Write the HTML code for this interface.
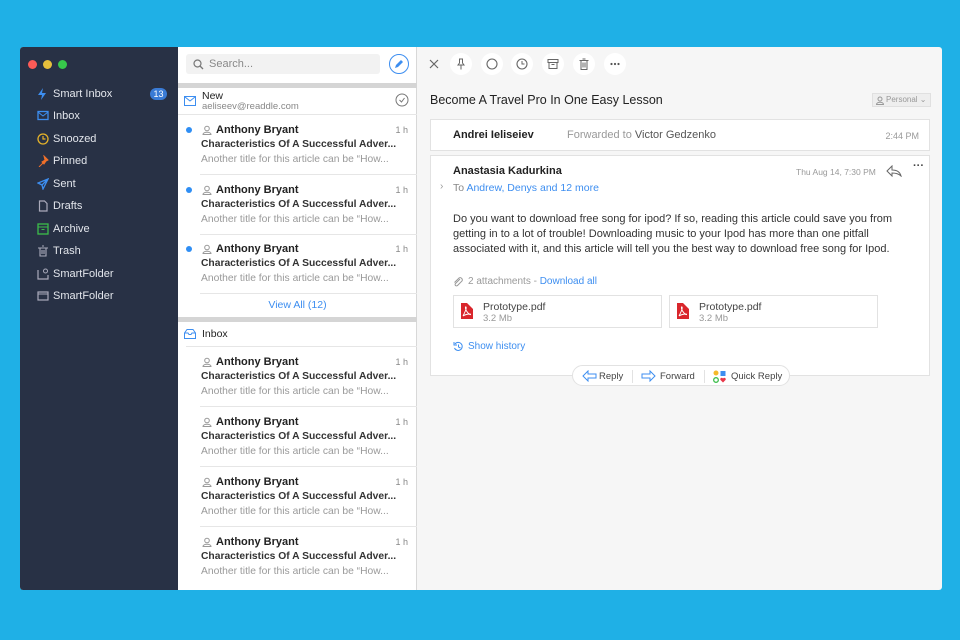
<!DOCTYPE html>
<html><head><meta charset="utf-8"><style>
*{margin:0;padding:0;box-sizing:border-box}
body{width:960px;height:640px;background:#1fb0e6;font-family:"Liberation Sans",sans-serif;position:relative;overflow:hidden}
.a{position:absolute}
.win{left:20px;top:47px;width:922px;height:543px;background:#f6f6f6;overflow:hidden;border-radius:3px}
.side{left:0;top:0;width:158px;height:543px;background:#283145}
.dot{width:9px;height:9px;border-radius:50%;top:13px}
.nav{left:0;width:158px;height:22px;color:#e3e6ec;font-size:11px;line-height:22px}
.nav span{position:absolute;left:33px}
.nav svg{position:absolute;left:17px;top:5px}
.list{left:158px;top:0;width:239px;height:543px;background:#fff;border-right:1px solid #d8d8d8}
.item{left:0;width:239px;height:60px}
.item .dt{left:8px;top:12px;width:6px;height:6px;border-radius:50%;background:#2f8ef4}
.item .nm{left:38px;top:9px;font-size:11px;font-weight:bold;color:#222}
.item .pi{left:24px;top:10px}
.item .tm{right:9px;top:10px;font-size:9px;color:#888}
.item .sb{left:23px;top:24px;font-size:10.3px;font-weight:bold;color:#333}
.item .pv{left:23px;top:39px;font-size:10.3px;color:#999}
.item .ln{left:22px;bottom:0;right:0;height:1px;background:#e6e6e6}
.gbar{left:0;width:239px;height:5px;background:#d5d5d5}
.tb{width:22px;height:22px;border-radius:50%;background:#fff;top:6px}
.tb svg{position:absolute;left:5px;top:5px}
.card{background:#fff;border:1px solid #e2e2e2}
</style></head><body>
<div class="a win">
 <div class="a side">
  <div class="a dot" style="left:8px;background:#fc5b57"></div>
  <div class="a dot" style="left:23px;background:#e5bf3c"></div>
  <div class="a dot" style="left:38px;background:#37c84b"></div>
  <div class="a nav" style="top:36px"><svg width="10" height="12"><path d="M6 0L1 7h4l-1 5 5-7H5z" fill="#3d8ef0"/></svg><span>Smart Inbox</span><div class="a" style="left:130px;top:5px;width:17px;height:12px;border-radius:6px;background:#3a7bd5;color:#fff;font-size:9px;line-height:12px;text-align:center">13</div></div>
  <div class="a nav" style="top:58px"><svg width="12" height="11"><rect x="1" y="1.5" width="10" height="8" fill="none" stroke="#3d8ef0" stroke-width="1.3"/><path d="M1 2l5 4 5-4" fill="none" stroke="#3d8ef0"/></svg><span>Inbox</span></div>
  <div class="a nav" style="top:81px"><svg width="12" height="12"><circle cx="6" cy="6" r="5" fill="none" stroke="#e5b32a" stroke-width="1.3"/><path d="M6 3v3h2.5" fill="none" stroke="#e5b32a" stroke-width="1.2"/></svg><span>Snoozed</span></div>
  <div class="a nav" style="top:103px"><svg width="12" height="12"><path d="M7 1l4 4-2 1-2 3-1-1-4 4 4-4-1-1 3-2z" fill="#f0702a" stroke="#f0702a"/></svg><span>Pinned</span></div>
  <div class="a nav" style="top:126px"><svg width="12" height="12"><path d="M11 1L1 5l4 2 1 4z M11 1L5 7" fill="none" stroke="#3d8ef0" stroke-width="1.3"/></svg><span>Sent</span></div>
  <div class="a nav" style="top:148px"><svg width="12" height="12"><path d="M2.5 1h5l2.5 2.5V11h-7.5z" fill="none" stroke="#aab" stroke-width="1.2"/></svg><span>Drafts</span></div>
  <div class="a nav" style="top:171px"><svg width="12" height="12"><rect x="1" y="1" width="10" height="10" fill="none" stroke="#3cbd4a" stroke-width="1.3"/><path d="M1 4h10M4.5 6.5h3" stroke="#3cbd4a"/></svg><span>Archive</span></div>
  <div class="a nav" style="top:193px"><svg width="12" height="12"><path d="M1 3h10M3 3v8h6V3M5 1h2M5 5v4M7 5v4" fill="none" stroke="#aab" stroke-width="1.1"/></svg><span>Trash</span></div>
  <div class="a nav" style="top:216px"><svg width="12" height="12"><path d="M1 2v9h10V7" fill="none" stroke="#aab" stroke-width="1.2"/><circle cx="8.5" cy="3" r="2" fill="none" stroke="#aab"/></svg><span>SmartFolder</span></div>
  <div class="a nav" style="top:238px"><svg width="12" height="12"><rect x="1" y="2" width="10" height="8" fill="none" stroke="#aab" stroke-width="1.2"/><path d="M1 4h10" stroke="#aab"/></svg><span>SmartFolder</span></div>
 </div>
 <div class="a list">
  <div class="a" style="left:8px;top:7px;width:194px;height:20px;background:#f2f2f2;border-radius:3px"><svg class="a" style="left:7px;top:5px" width="11" height="11"><circle cx="4.5" cy="4.5" r="3.5" fill="none" stroke="#777" stroke-width="1.2"/><path d="M7 7l3 3" stroke="#777" stroke-width="1.3"/></svg><div class="a" style="left:23px;top:4px;font-size:11px;color:#888">Search...</div></div>
  <div class="a" style="left:211px;top:7px;width:20px;height:20px;border-radius:50%;border:1.3px solid #3d8ef0"><svg class="a" style="left:4px;top:4px" width="10" height="10"><path d="M1 9l1-3 5-5 2 2-5 5z" fill="#3d8ef0"/></svg></div>
  <div class="a gbar" style="top:36px"></div>
  <svg class="a" style="left:6px;top:49px" width="12" height="10"><rect x=".5" y=".5" width="11" height="9" fill="none" stroke="#3d8ef0"/><path d="M1 1l5 4 5-4" fill="none" stroke="#3d8ef0"/></svg>
  <div class="a" style="left:24px;top:43px;font-size:10.5px;color:#222">New</div>
  <div class="a" style="left:24px;top:54px;font-size:9.5px;color:#888">aeliseev@readdle.com</div>
  <svg class="a" style="left:217px;top:46px" width="14" height="14"><circle cx="7" cy="7" r="6" fill="none" stroke="#777"/><path d="M4.5 7l2 2 3-4" fill="none" stroke="#777"/></svg>
  <div class="a" style="left:0;top:67px;width:239px;height:1px;background:#e6e6e6"></div>

  <div class="a item" style="top:68px"><div class="a dt"></div><svg class="a pi" width="10" height="10"><circle cx="5" cy="3.5" r="2.3" fill="none" stroke="#999"/><path d="M1 9.5c0-3 8-3 8 0z" fill="none" stroke="#999"/></svg><div class="a nm">Anthony Bryant</div><div class="a tm">1 h</div><div class="a sb">Characteristics Of A Successful Adver...</div><div class="a pv">Another title for this article can be “How...</div><div class="a ln"></div></div>
  <div class="a item" style="top:128px"><div class="a dt"></div><svg class="a pi" width="10" height="10"><circle cx="5" cy="3.5" r="2.3" fill="none" stroke="#999"/><path d="M1 9.5c0-3 8-3 8 0z" fill="none" stroke="#999"/></svg><div class="a nm">Anthony Bryant</div><div class="a tm">1 h</div><div class="a sb">Characteristics Of A Successful Adver...</div><div class="a pv">Another title for this article can be “How...</div><div class="a ln"></div></div>
  <div class="a item" style="top:187px"><div class="a dt"></div><svg class="a pi" width="10" height="10"><circle cx="5" cy="3.5" r="2.3" fill="none" stroke="#999"/><path d="M1 9.5c0-3 8-3 8 0z" fill="none" stroke="#999"/></svg><div class="a nm">Anthony Bryant</div><div class="a tm">1 h</div><div class="a sb">Characteristics Of A Successful Adver...</div><div class="a pv">Another title for this article can be “How...</div><div class="a ln"></div></div>
  <div class="a" style="left:0;width:239px;top:252px;text-align:center;font-size:10.5px;color:#3d8ef0">View All (12)</div>
  <div class="a gbar" style="top:270px"></div>
  <svg class="a" style="left:6px;top:282px" width="12" height="10"><path d="M.5 4L3 .5h6L11.5 4v5.5H.5z M.5 4h3.5l1 1.5h2l1-1.5h3.5" fill="none" stroke="#3d8ef0"/></svg>
  <div class="a" style="left:24px;top:281px;font-size:10.5px;color:#222">Inbox</div>
  <div class="a" style="left:8px;top:299px;width:231px;height:1px;background:#e6e6e6"></div>
  <div class="a item" style="top:300px"><svg class="a pi" width="10" height="10"><circle cx="5" cy="3.5" r="2.3" fill="none" stroke="#999"/><path d="M1 9.5c0-3 8-3 8 0z" fill="none" stroke="#999"/></svg><div class="a nm">Anthony Bryant</div><div class="a tm">1 h</div><div class="a sb">Characteristics Of A Successful Adver...</div><div class="a pv">Another title for this article can be “How...</div><div class="a ln"></div></div>
  <div class="a item" style="top:360px"><svg class="a pi" width="10" height="10"><circle cx="5" cy="3.5" r="2.3" fill="none" stroke="#999"/><path d="M1 9.5c0-3 8-3 8 0z" fill="none" stroke="#999"/></svg><div class="a nm">Anthony Bryant</div><div class="a tm">1 h</div><div class="a sb">Characteristics Of A Successful Adver...</div><div class="a pv">Another title for this article can be “How...</div><div class="a ln"></div></div>
  <div class="a item" style="top:420px"><svg class="a pi" width="10" height="10"><circle cx="5" cy="3.5" r="2.3" fill="none" stroke="#999"/><path d="M1 9.5c0-3 8-3 8 0z" fill="none" stroke="#999"/></svg><div class="a nm">Anthony Bryant</div><div class="a tm">1 h</div><div class="a sb">Characteristics Of A Successful Adver...</div><div class="a pv">Another title for this article can be “How...</div><div class="a ln"></div></div>
  <div class="a item" style="top:480px"><svg class="a pi" width="10" height="10"><circle cx="5" cy="3.5" r="2.3" fill="none" stroke="#999"/><path d="M1 9.5c0-3 8-3 8 0z" fill="none" stroke="#999"/></svg><div class="a nm">Anthony Bryant</div><div class="a tm">1 h</div><div class="a sb">Characteristics Of A Successful Adver...</div><div class="a pv">Another title for this article can be “How...</div></div>
 </div>

 <div class="a" style="left:398px;top:0;width:524px;height:543px">
  <svg class="a" style="left:11px;top:12px" width="10" height="10"><path d="M1 1l8 8M9 1L1 9" stroke="#666" stroke-width="1.2"/></svg>
  <div class="a tb" style="left:32px"><svg width="12" height="12"><path d="M4 1h4M4.5 1v4L3 7h6L7.5 5V1M6 7v4.5" fill="none" stroke="#666"/></svg></div>
  <div class="a tb" style="left:63px"><svg width="12" height="12"><circle cx="6" cy="6" r="5" fill="none" stroke="#666" stroke-width="1.1"/></svg></div>
  <div class="a tb" style="left:93px"><svg width="12" height="12"><circle cx="6" cy="6" r="5" fill="none" stroke="#666" stroke-width="1.1"/><path d="M6 3v3h2.5" fill="none" stroke="#666"/></svg></div>
  <div class="a tb" style="left:124px"><svg width="12" height="12"><rect x="1" y="1.5" width="10" height="3" fill="none" stroke="#666"/><path d="M2 4.5v6h8v-6M4.5 6.5h3" fill="none" stroke="#666"/></svg></div>
  <div class="a tb" style="left:155px"><svg width="12" height="12"><path d="M1.5 2.5h9M3 2.5v9h6v-9M4.5 1h3M5 4.5v5M7 4.5v5" fill="none" stroke="#666"/></svg></div>
  <div class="a tb" style="left:186px"><svg width="12" height="12"><circle cx="2.5" cy="6" r="1.1" fill="#555"/><circle cx="6" cy="6" r="1.1" fill="#555"/><circle cx="9.5" cy="6" r="1.1" fill="#555"/></svg></div>
  <div class="a" style="left:12px;top:46px;font-size:12.5px;color:#222">Become A Travel Pro In One Easy Lesson</div>
  <div class="a" style="left:454px;top:46px;width:59px;height:14px;background:#eee;border:1px solid #e0e0e0;font-size:8px;color:#999;line-height:12px;padding-left:13px">Personal ⌄<svg class="a" style="left:3px;top:2px" width="8" height="9"><circle cx="4" cy="3" r="2" fill="none" stroke="#999"/><path d="M.5 8.5c0-3 7-3 7 0z" fill="none" stroke="#999"/></svg></div>
  <div class="a card" style="left:12px;top:72px;width:500px;height:32px"><div class="a" style="left:22px;top:9px;font-size:11px;font-weight:bold;color:#222">Andrei Ieliseiev</div><div class="a" style="left:136px;top:9px;font-size:11px;color:#999">Forwarded to <span style="color:#555">Victor Gedzenko</span></div><div class="a" style="right:10px;top:11px;font-size:9px;color:#999">2:44 PM</div></div>
  <div class="a card" style="left:12px;top:108px;width:500px;height:221px">
   <div class="a" style="left:22px;top:9px;font-size:11px;font-weight:bold;color:#222">Anastasia Kadurkina</div>
   <div class="a" style="left:365px;top:11px;font-size:8.5px;color:#999">Thu Aug 14, 7:30 PM</div>
   <svg class="a" style="left:455px;top:9px" width="16" height="12"><path d="M6 1L1 6l5 5V8c4 0 7 1 9 3-1-4-4-6-9-6V1z" fill="none" stroke="#666"/></svg>
   <div class="a" style="left:482px;top:4px;font-size:11px;color:#444;font-weight:bold">···</div>
   <div class="a" style="left:9px;top:25px;font-size:10px;color:#999">›</div>
   <div class="a" style="left:22px;top:26px;font-size:10.5px;color:#888">To <span style="color:#3d8ef0">Andrew, Denys and 12 more</span></div>
   <div class="a" style="left:22px;top:56px;width:448px;font-size:11px;line-height:15px;color:#333">Do you want to download free song for ipod? If so, reading this article could save you from getting in to a lot of trouble! Downloading music to your Ipod has more than one pitfall associated with it, and this article will tell you the best way to download free song for Ipod.</div>
   <svg class="a" style="left:22px;top:121px" width="10" height="10"><path d="M7 2L2.5 6.5a1.3 1.3 0 002 2L9 4a2.2 2.2 0 00-3-3L1.5 5.5" fill="none" stroke="#999"/></svg>
   <div class="a" style="left:37px;top:120px;font-size:10px;color:#999">2 attachments - <span style="color:#3d8ef0">Download all</span></div>
   <div class="a" style="left:22px;top:139px;width:209px;height:33px;border:1px solid #e2e2e2"><svg class="a" style="left:7px;top:7px" width="12" height="16"><path d="M0 0h6l6 6v10H0z" fill="#d9262c"/><path d="M2 13c2-4 4-8 3-9s-1 3 2 6 3 1 2 1-4 0-7 2" fill="none" stroke="#fff" stroke-width=".9"/></svg><div class="a" style="left:29px;top:5px;font-size:10.5px;color:#444">Prototype.pdf</div><div class="a" style="left:29px;top:17px;font-size:9.5px;color:#999">3.2 Mb</div></div>
   <div class="a" style="left:238px;top:139px;width:209px;height:33px;border:1px solid #e2e2e2"><svg class="a" style="left:7px;top:7px" width="12" height="16"><path d="M0 0h6l6 6v10H0z" fill="#d9262c"/><path d="M2 13c2-4 4-8 3-9s-1 3 2 6 3 1 2 1-4 0-7 2" fill="none" stroke="#fff" stroke-width=".9"/></svg><div class="a" style="left:29px;top:5px;font-size:10.5px;color:#444">Prototype.pdf</div><div class="a" style="left:29px;top:17px;font-size:9.5px;color:#999">3.2 Mb</div></div>
   <svg class="a" style="left:22px;top:185px" width="11" height="11"><path d="M2 3a4 4 0 11-.5 4M1 1v3h3M5.5 3.5v2.5l2 1" fill="none" stroke="#3d8ef0"/></svg>
   <div class="a" style="left:37px;top:185px;font-size:10px;color:#3d8ef0">Show history</div>
  </div>
  <div class="a" style="left:154px;top:318px;width:218px;height:21px;background:#fff;border:1px solid #e2e2e2;border-radius:11px;font-size:9.5px;color:#444">
   <svg class="a" style="left:9px;top:4px" width="15" height="12"><path d="M6 1L1 6l5 5V8h8V4H6z" fill="none" stroke="#3d8ef0"/></svg><div class="a" style="left:26px;top:5px">Reply</div>
   <div class="a" style="left:59px;top:4px;width:1px;height:13px;background:#e2e2e2"></div>
   <svg class="a" style="left:68px;top:4px" width="15" height="12"><path d="M9 1l5 5-5 5V8H1V4h8z" fill="none" stroke="#3d8ef0"/></svg><div class="a" style="left:87px;top:5px">Forward</div>
   <div class="a" style="left:131px;top:4px;width:1px;height:13px;background:#e2e2e2"></div>
   <svg class="a" style="left:140px;top:4px" width="14" height="13"><circle cx="3" cy="3" r="2.5" fill="#f5b92a"/><rect x="7.5" y="1" width="5" height="5" fill="#3d8ef0"/><circle cx="3" cy="10" r="2.3" fill="none" stroke="#3cbd4a" stroke-width="1.3"/><path d="M10 12.5L7.5 10a1.4 1.4 0 012.5-1.5 1.4 1.4 0 012.5 1.5z" fill="#e8384a"/></svg><div class="a" style="left:158px;top:5px">Quick Reply</div>
  </div>
 </div>
</div>
</body></html>
